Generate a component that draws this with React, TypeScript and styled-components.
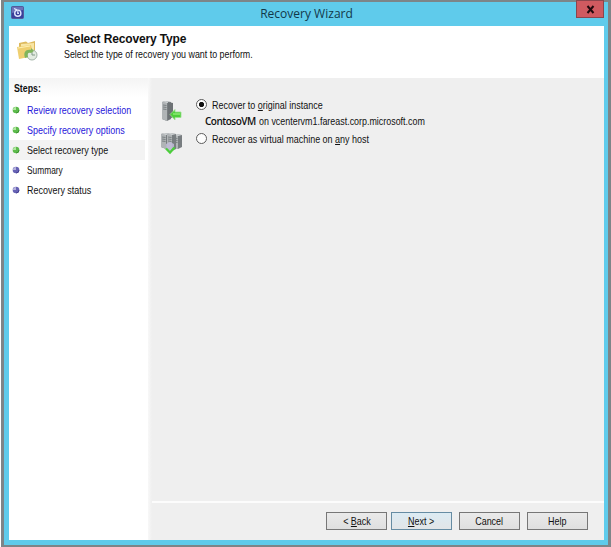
import React from "react";
import styled, { createGlobalStyle } from "styled-components";

const GlobalStyle = createGlobalStyle`
  * { box-sizing: border-box; }
  body { margin: 0; background: #fff; overflow: hidden; }
  button { font: inherit; color: inherit; }
`;

const Frame = styled.div`
  width: 610px;
  height: 547px;
  margin-left: 1px;
  border: solid #7d8588;
  border-width: 2px 3px 2px 3px;
  font-family: "Liberation Sans", Arial, sans-serif;
  font-size: 11px;
  color: #111;
`;

const Window = styled.div`
  display: flex;
  flex-direction: column;
  height: 543px;
  padding: 0 4px 5px 5px;
  background: #5fcbeb;
`;

const TitleBar = styled.header`
  display: grid;
  grid-template-columns: 32px 1fr 32px;
  height: 24px;
  flex: none;
`;

const AppIcon = styled.svg`
  margin: 4px 0 0 2px;
`;

const WindowTitle = styled.h1`
  margin: 0;
  text-align: center;
  font: 400 13px/23px "Open Sans", sans-serif;
  transform: scaleX(0.925);
  color: #12384a;
`;

const CloseButton = styled.button`
  width: 28px;
  height: 18px;
  margin: -2px 0 0 4px;
  padding: 1px 0 0;
  display: grid;
  place-items: center;
  border: 1px solid #8b454d;
  background: #cf5a60;
`;

const Banner = styled.section`
  display: grid;
  grid-template-columns: 55px 1fr;
  height: 52px;
  flex: none;
  background: #fff;
`;

const FolderIcon = styled.svg`
  margin: 13px 0 0 7px;
`;

const Heading = styled.h2`
  margin: 5px 0 0 2px;
  font-size: 12px;
  line-height: 16px;
  font-weight: 700;
  letter-spacing: -0.15px;
`;

const Label = styled.span<{ $scale?: number; $origin?: string }>`
  display: inline-block;
  white-space: pre;
  line-height: 14px;
  transform: scaleX(${(p) => p.$scale ?? 0.815});
  transform-origin: ${(p) => p.$origin ?? "left"} center;
  justify-self: start;

  u {
    text-underline-offset: 1px;
  }
`;

const Body = styled.div`
  display: grid;
  grid-template-columns: 139px 1fr;
  flex: 1;
  min-height: 0;
`;

const Sidebar = styled.nav`
  background: #fff;
`;

const StepsTitle = styled.h3`
  height: 20px;
  margin: 0;
  padding: 3px 0 0 5px;
  font-size: 11px;
  line-height: 14px;
  background: linear-gradient(#f4f4f4, #fbfbfb 60%, #fff);
`;

const StepList = styled.ol`
  list-style: none;
  margin: 2px 0 0;
  padding: 0;
`;

const Step = styled.li<{ $link?: boolean; $current?: boolean }>`
  display: grid;
  grid-template-columns: 18px 1fr;
  align-items: center;
  height: 20px;
  margin-right: 3px;
  color: ${(p) => (p.$link ? "#1f16da" : "#111")};
  background: ${(p) => (p.$current ? "#f3f3f3" : "transparent")};
`;

const Dot = styled.svg`
  margin-left: 3px;
`;

const Main = styled.main`
  display: flex;
  flex-direction: column;
  background: linear-gradient(90deg, #f8f8f8, #efefef 4px);
`;

const Options = styled.div`
  display: flex;
  flex-direction: column;
  height: 423px;
  padding: 20px 0 0 14px;
`;

const Option = styled.div`
  display: grid;
  grid-template-columns: 34px 14px 1fr;
  height: 34px;
`;

const OptionIcon = styled.svg<{ $top: number }>`
  margin: ${(p) => p.$top}px 0 0 -1px;
`;

const Radio = styled.span<{ $checked?: boolean }>`
  width: 11px;
  height: 11px;
  margin-top: 1px;
  border: 1px solid #5c5c5c;
  border-radius: 50%;
  background: ${(p) => (p.$checked ? "radial-gradient(circle, #111 0 2.2px, #fff 3px)" : "#fdfdfd")};
`;

const OptionText = styled.div`
  display: flex;
  flex-direction: column;
  align-items: flex-start;
  padding-left: 2px;
`;

const Detail = styled.div`
  margin: 2px 0 0 -7px;
  line-height: 14px;
  display: grid;
  grid-template-columns: 54px 1fr;
`;

const MachineName = styled.span`
  font-family: "Open Sans", sans-serif;
  font-size: 10px;
  font-weight: 600;
  line-height: 14px;
  letter-spacing: -0.5px;
`;

const Footer = styled.footer`
  display: flex;
  justify-content: flex-end;
  margin-left: 4px;
  padding: 9px 16px 0 0;
  border-top: 2px solid #fcfcfc;
`;

const Button = styled.button<{ $primary?: boolean; $gap?: number }>`
  width: 61px;
  height: 18px;
  margin: 0 0 0 ${(p) => p.$gap ?? 7}px;
  padding: 0;
  display: flex;
  align-items: center;
  justify-content: center;
  border: 1px solid ${(p) => (p.$primary ? "#668ca3" : "#777")};
  background: ${(p) => (p.$primary ? "linear-gradient(#dcebf3, #e2e5e7)" : "linear-gradient(#eaeaea, #dfdfdf)")};
`;

function Bullet({ done }: { done?: boolean }) {
  return (
    <Dot width="8" height="8" viewBox="0 0 8 8">
      <circle cx="4" cy="4" r="3.3" fill={done ? "#5dbb4c" : "#6762b4"} />
      <path d="M1 4Q1 1 4 1L4 4Z" fill={done ? "#b3e5a2" : "#b5b2dd"} />
      <path d="M4 7Q7 7 7 4" fill="none" stroke={done ? "#39932f" : "#423d92"} />
    </Dot>
  );
}

function Tower({ x, y, h }: { x: number; y: number; h: number }) {
  return (
    <g transform={`translate(${x} ${y})`}>
      <path d={`M0 1L3 0L9 1V${h - 2}L5 ${h}L0 ${h - 2}Z`} fill="#787d80" />
      <path d={`M0 1L5 2V${h}L0 ${h - 2}Z`} fill="#b0b4b6" />
      <path d="M0 1L3 0L9 1L5 2Z" fill="#d3d6d8" />
      <path d="M1 4L4.5 4.5M1 6L4.5 6.5M1 8L4.5 8.5" stroke="#74797c" strokeWidth=".9" />
    </g>
  );
}

function ServerArrow() {
  return (
    <OptionIcon $top={2} width="22" height="22" viewBox="0 0 22 22">
      <Tower x={1} y={1} h={20} />
      <path d="M7 2L12 3V17L7 20Z" fill="#6d7275" />
      <path d="M9 14.5L14 9.5V12H20V17.5H14V20Z" fill="#4fce3b" stroke="#9be08d" strokeWidth=".8" />
      <path d="M12 14H19" stroke="#90ec78" strokeWidth="1.4" />
    </OptionIcon>
  );
}

function ServerGroup() {
  return (
    <OptionIcon $top={1} width="22" height="22" viewBox="0 0 22 22">
      <Tower x={0} y={0} h={16} />
      <Tower x={12} y={1} h={15} />
      <Tower x={6} y={0} h={18} />
      <path d="M5 11L9 9L13 11V15L9 20L5 16Z" fill="#c2bcd8" opacity=".85" />
      <path d="M5 15.5L9 19.5L13.5 14.5" fill="none" stroke="#4bce3b" strokeWidth="2.3" />
    </OptionIcon>
  );
}

export default function App() {
  return (
    <>
      <GlobalStyle />
      <Frame>
        <Window>
          <TitleBar>
            <AppIcon width="13" height="13" viewBox="0 0 13 13">
              <rect x=".5" y=".5" width="12" height="12" rx="1" fill="#39409b" stroke="#535b99" />
              <path d="M1 1H12V4L1 7Z" fill="#6b72b8" />
              <circle cx="6.8" cy="7.2" r="3.1" fill="none" stroke="#e1e8ff" strokeWidth="1.4" />
              <path d="M3 2.5L6 3.8M6.8 5.3V7.3H8" fill="none" stroke="#e1e8ff" strokeWidth="1.3" />
            </AppIcon>
            <WindowTitle>Recovery Wizard</WindowTitle>
            <CloseButton aria-label="Close">
              <svg width="9" height="9" viewBox="0 0 9 9">
                <path d="M1.5 1L7.5 8M7.5 1L1.5 8" stroke="#21090d" strokeWidth="2" />
              </svg>
            </CloseButton>
          </TitleBar>
          <Banner>
            <FolderIcon width="23" height="23" viewBox="0 0 23 23">
              <path d="M3 4L10 2.5L12 4L19 2V17L3 19Z" fill="#ddb95d" />
              <path d="M5 5L18 4V15L5 18Z" fill="#f8e6a6" />
              <path d="M1 8L15 6L18 17L3 20Z" fill="#efcf70" />
              <path d="M2 9L14 7" stroke="#fff0b2" />
              <circle cx="16" cy="16" r="5" fill="#e3ebe1" stroke="#a3b4a8" />
              <path d="M16 12.5V16H19" fill="none" stroke="#819888" />
              <path d="M9 19C7 13 10 10 15 11V9L18 12L15 14C12 13 11 15 12 18Z" fill="#80b55b" />
            </FolderIcon>
            <div>
              <Heading>Select Recovery Type</Heading>
              <Label $scale={0.808}>Select the type of recovery you want to perform.</Label>
            </div>
          </Banner>
          <Body>
            <Sidebar>
              <StepsTitle><Label $scale={0.8}>Steps:</Label></StepsTitle>
              <StepList>
                <Step $link><Bullet done /><Label>Review recovery selection</Label></Step>
                <Step $link><Bullet done /><Label>Specify recovery options</Label></Step>
                <Step $current><Bullet done /><Label>Select recovery type</Label></Step>
                <Step><Bullet /><Label $scale={0.76}>Summary</Label></Step>
                <Step><Bullet /><Label>Recovery status</Label></Step>
              </StepList>
            </Sidebar>
            <Main>
              <Options>
                <Option>
                  <ServerArrow />
                  <Radio $checked />
                  <OptionText>
                    <Label>Recover to <u>o</u>riginal instance</Label>
                    <Detail>
                      <MachineName>ContosoVM</MachineName>
                      <Label $scale={0.81}>on vcentervm1.fareast.corp.microsoft.com</Label>
                    </Detail>
                  </OptionText>
                </Option>
                <Option>
                  <ServerGroup />
                  <Radio />
                  <OptionText>
                    <Label>Recover as virtual machine on <u>a</u>ny host</Label>
                  </OptionText>
                </Option>
              </Options>
              <Footer>
                <Button><Label $origin="center">&lt; <u>B</u>ack</Label></Button>
                <Button $primary $gap={4}><Label $origin="center"><u>N</u>ext &gt;</Label></Button>
                <Button><Label $origin="center">Cancel</Label></Button>
                <Button><Label $origin="center">Help</Label></Button>
              </Footer>
            </Main>
          </Body>
        </Window>
      </Frame>
    </>
  );
}
